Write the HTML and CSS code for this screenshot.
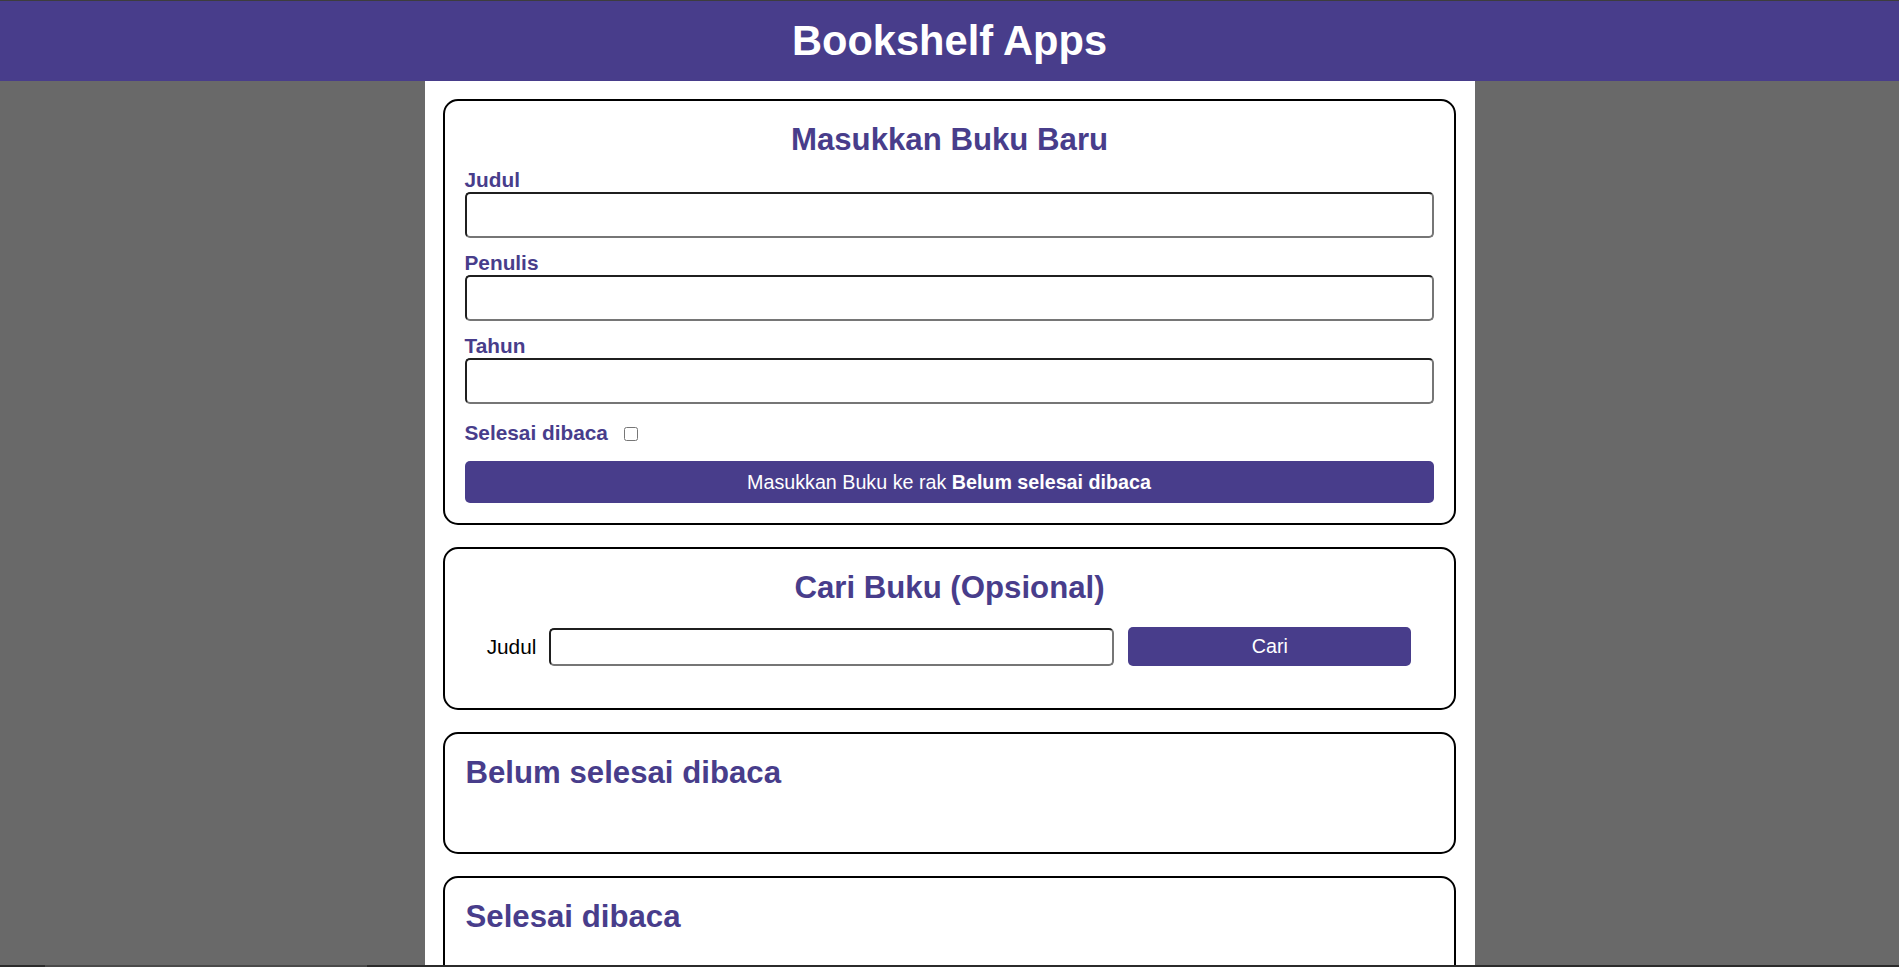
FILE: index.html
```html
<!DOCTYPE html>
<html lang="id">
<head>
<meta charset="utf-8">
<title>Bookshelf Apps</title>
<link rel="stylesheet" href="styles.css">
</head>
<body>
<header class="app-header">
  <h1 class="app-title">Bookshelf Apps</h1>
</header>
<main class="app-main">
  <section class="card">
    <h2 class="card-title centered">Masukkan Buku Baru</h2>
    <form class="book-form">
      <div class="field">
        <label class="field-label" for="inputBookTitle">Judul</label>
        <input class="text-input" id="inputBookTitle" type="text">
      </div>
      <div class="field">
        <label class="field-label" for="inputBookAuthor">Penulis</label>
        <input class="text-input" id="inputBookAuthor" type="text">
      </div>
      <div class="field">
        <label class="field-label" for="inputBookYear">Tahun</label>
        <input class="text-input" id="inputBookYear" type="text">
      </div>
      <div class="check-row">
        <label class="check-label" for="inputBookIsComplete">Selesai dibaca</label>
        <input class="check-input" id="inputBookIsComplete" type="checkbox">
      </div>
      <button class="submit-btn" type="button">Masukkan Buku ke rak <span class="strong">Belum selesai dibaca</span></button>
    </form>
  </section>

  <section class="card">
    <h2 class="card-title centered">Cari Buku (Opsional)</h2>
    <form class="search-form">
      <label class="search-label" for="searchBookTitle">Judul</label>
      <input class="search-input" id="searchBookTitle" type="text">
      <button class="search-btn" type="button">Cari</button>
    </form>
  </section>

  <section class="card">
    <h2 class="card-title">Belum selesai dibaca</h2>
    <div class="book-list"></div>
  </section>

  <section class="card">
    <h2 class="card-title">Selesai dibaca</h2>
    <div class="book-list"></div>
  </section>
</main>
<div class="bottom-strip"></div>
</body>
</html>
```
FILE: styles.css
```css
* {
  box-sizing: border-box;
}

html, body {
  margin: 0;
  padding: 0;
}

body {
  background: #696969;
  font-family: "Liberation Sans", Arial, sans-serif;
  font-size: 20.8px;
  color: #000;
}

.app-header {
  background: #483d8b;
  border-top: 1px solid #3d3d3d;
  padding: 16px 0;
  text-align: center;
}

.app-title {
  margin: 0;
  color: #fff;
  font-size: 41.6px;
  font-weight: bold;
  line-height: 48px;
}

.app-main {
  width: 1050px;
  margin: 0 auto;
  background: #fff;
  padding: 18px 19px 1px 18px;
  min-height: calc(100vh - 81px);
}

.card {
  border: 2px solid #000;
  border-radius: 15px;
  padding: 21px 20px 20px 21px;
  margin-bottom: 22px;
}

.card-title {
  margin: 0;
  color: #483d8b;
  font-size: 31.2px;
  font-weight: bold;
  line-height: normal;
}

.centered {
  text-align: center;
}

.book-form {
  margin-top: 10px;
  margin-left: -1px;
}

.field + .field {
  margin-top: 13px;
}

.field-label {
  display: block;
  color: #483d8b;
  font-weight: bold;
  font-size: 20.8px;
  line-height: 24px;
}

.text-input {
  display: block;
  width: 100%;
  height: 46px;
  margin: 0;
  border: 2px solid;
  border-color: #1f1f1f #767676 #767676 #1f1f1f;
  border-radius: 5px;
  padding: 0 8px;
  font-family: inherit;
  font-size: 20px;
  background: #fff;
}

.check-row {
  margin-top: 17px;
  line-height: 24px;
}

.check-label {
  color: #483d8b;
  font-weight: bold;
  margin-right: 6px;
}

.check-input {
  width: 14px;
  height: 14px;
  margin: 0 0 0 4px;
  vertical-align: -1px;
}

.submit-btn {
  display: block;
  width: 100%;
  height: 42px;
  margin-top: 16px;
  border: none;
  border-radius: 5px;
  background: #483d8b;
  color: #fff;
  font-family: inherit;
  font-size: 19.7px;
  line-height: 23px;
  cursor: pointer;
}

.strong {
  font-weight: bold;
}

.search-form {
  display: flex;
  align-items: center;
  justify-content: center;
  margin: 21px 0 22px -1px;
}

.search-label {
  font-size: 20.8px;
  color: #000;
  margin-right: 13px;
}

.search-input {
  width: 565px;
  height: 38px;
  margin: 0 14px 0 0;
  border: 2px solid;
  border-color: #1f1f1f #767676 #767676 #1f1f1f;
  border-radius: 5px;
  padding: 0 8px;
  font-family: inherit;
  font-size: 20px;
}

.search-btn {
  width: 283px;
  height: 39px;
  border: none;
  border-radius: 5px;
  background: #483d8b;
  color: #fff;
  font-family: inherit;
  font-size: 19.7px;
  cursor: pointer;
}

.book-list {
  min-height: 41px;
}

.bottom-strip {
  position: fixed;
  left: 0;
  right: 0;
  bottom: 0;
  height: 2px;
  background: linear-gradient(to right, #2b2b2b 0, #2b2b2b 45px, #4a4a4a 45px, #4a4a4a 367px, #2b2b2b 367px);
}
```
